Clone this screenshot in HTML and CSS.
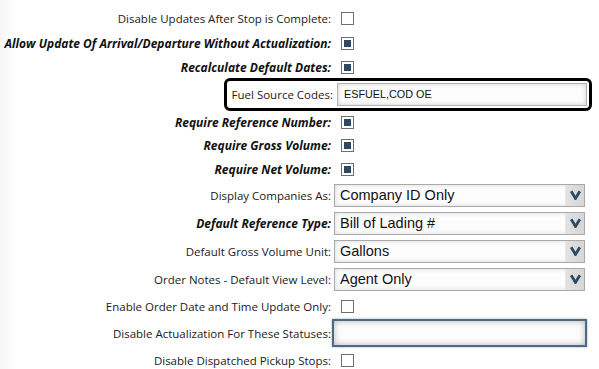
FILE: index.html
```html
<!DOCTYPE html>
<html lang="en">
<head>
    <meta charset="UTF-8">
    <title>Stop Settings</title>
    <link rel="stylesheet" href="styles.css">
</head>
<body>
    <div class="settings">
        <div class="row r1">
            <label>Disable Updates After Stop is Complete:</label>
            <span class="check"></span>
        </div>
        <div class="row r2">
            <label class="strong">Allow Update Of Arrival/Departure Without Actualization:</label>
            <span class="check on"></span>
        </div>
        <div class="row r3">
            <label class="strong">Recalculate Default Dates:</label>
            <span class="check on"></span>
        </div>

        <!-- highlighted row -->
        <div class="row fuel">
            <label>Fuel Source Codes:</label>
            <div class="text-box">ESFUEL,COD OE</div>
        </div>

        <div class="row r5">
            <label class="strong">Require Reference Number:</label>
            <span class="check on"></span>
        </div>
        <div class="row r6">
            <label class="strong">Require Gross Volume:</label>
            <span class="check on"></span>
        </div>
        <div class="row r7">
            <label class="strong">Require Net Volume:</label>
            <span class="check on"></span>
        </div>

        <div class="row sel">
            <label>Display Companies As:</label>
            <div class="select"><span>Company ID Only</span><b class="arrow"><svg width="11" height="10" viewBox="0 0 11 10"><path d="M1.2 1.2 L5.5 8.4 L9.8 1.2" fill="none" stroke="#2d4a62" stroke-width="2.8"/></svg></b></div>
        </div>
        <div class="row sel">
            <label class="strong">Default Reference Type:</label>
            <div class="select"><span>Bill of Lading #</span><b class="arrow"><svg width="11" height="10" viewBox="0 0 11 10"><path d="M1.2 1.2 L5.5 8.4 L9.8 1.2" fill="none" stroke="#2d4a62" stroke-width="2.8"/></svg></b></div>
        </div>
        <div class="row sel">
            <label>Default Gross Volume Unit:</label>
            <div class="select"><span>Gallons</span><b class="arrow"><svg width="11" height="10" viewBox="0 0 11 10"><path d="M1.2 1.2 L5.5 8.4 L9.8 1.2" fill="none" stroke="#2d4a62" stroke-width="2.8"/></svg></b></div>
        </div>
        <div class="row sel">
            <label>Order Notes - Default View Level:</label>
            <div class="select"><span>Agent Only</span><b class="arrow"><svg width="11" height="10" viewBox="0 0 11 10"><path d="M1.2 1.2 L5.5 8.4 L9.8 1.2" fill="none" stroke="#2d4a62" stroke-width="2.8"/></svg></b></div>
        </div>

        <div class="row r12">
            <label>Enable Order Date and Time Update Only:</label>
            <span class="check"></span>
        </div>
        <div class="row r13">
            <label>Disable Actualization For These Statuses:</label>
            <div class="text-box focus"></div>
        </div>
        <div class="row r14">
            <label>Disable Dispatched Pickup Stops:</label>
            <span class="check"></span>
        </div>
    </div>
</body>
</html>
```

FILE: styles.css
```css
/* Page */
body {
    margin: 0;
    background: linear-gradient(to right, #f7f7f7 0, #fdfdfd 12px, #fff 16px);
    font-family: "Open Sans", "Noto Sans", Arial, sans-serif;
    font-size: 11.5px;
    color: #1a1a1a;
    height: 369px;
    overflow: hidden;
}

.settings {
    padding-top: 6px;
}

/* Rows */
.row {
    display: grid;
    grid-template-columns: 334px 1fr;
    align-items: center;
    height: 24px;
}

.row label {
    text-align: right;
    white-space: nowrap;
    padding-right: 3px;
}

.row label.strong {
    font-size: 12px;
    font-weight: bold;
    font-style: italic;
    color: #111;
}

.r1 { height: 25px; }
.r2 { height: 25px; }
.r3 { height: 22px; }
.r5 { height: 22px; }
.r6 { height: 25px; }
.r7 { height: 23px; }
.sel { height: 28px; }
.r12 { height: 26px; }
.r13 { height: 28px; }
.r14 { height: 26px; }

/* Checkboxes */
.check {
    display: block;
    width: 11px;
    height: 11px;
    margin-left: 7px;
    border: 1px solid #6f6f6f;
    background: #fff;
    position: relative;
}

.check.on::after {
    content: "";
    position: absolute;
    left: 2px;
    top: 2px;
    width: 7px;
    height: 7px;
    background: #2d4a62;
}

/* Fuel Source highlight */
.fuel {
    height: 33px;
    margin: 0 7px 0 224px;
    grid-template-columns: 110px 1fr;
    border: 3px solid #000;
    border-radius: 6px;
    box-sizing: border-box;
}

.fuel label {
    padding-right: 4px;
}

/* Text inputs */
.text-box {
    width: 250px;
    height: 23px;
    box-sizing: border-box;
    border: 1px solid #b4b4b4;
    background: #fcfcfc;
    box-shadow: inset 0 0 5px rgba(0, 0, 0, 0.18);
    font-family: "Liberation Sans", Arial, sans-serif;
    font-size: 10.8px;
    line-height: 21px;
    padding-left: 6px;
    color: #111;
}

.text-box.focus {
    width: 255px;
    height: 28px;
    margin-left: -2px;
    border: 2px solid #4d6a83;
    box-shadow: inset 0 0 6px rgba(0, 0, 0, 0.3), 0 0 2px rgba(77, 106, 131, 0.6);
}

/* Selects */
.select {
    display: flex;
    width: 251px;
    height: 23px;
    box-sizing: border-box;
    border: 1px solid #a9a9a9;
    background: #fdfdfd;
    box-shadow: inset 0 0 5px rgba(0, 0, 0, 0.15);
    font-family: "Liberation Sans", Arial, sans-serif;
    font-size: 14.5px;
    color: #111;
}

.select span {
    flex: 1;
    padding-left: 5px;
    line-height: 21px;
}

.select .arrow {
    display: flex;
    align-items: center;
    justify-content: center;
    width: 18px;
    background: linear-gradient(to right, #e2e2e2, #d6d6d6);
    border-left: 1px solid #e8e8e8;
}
```
